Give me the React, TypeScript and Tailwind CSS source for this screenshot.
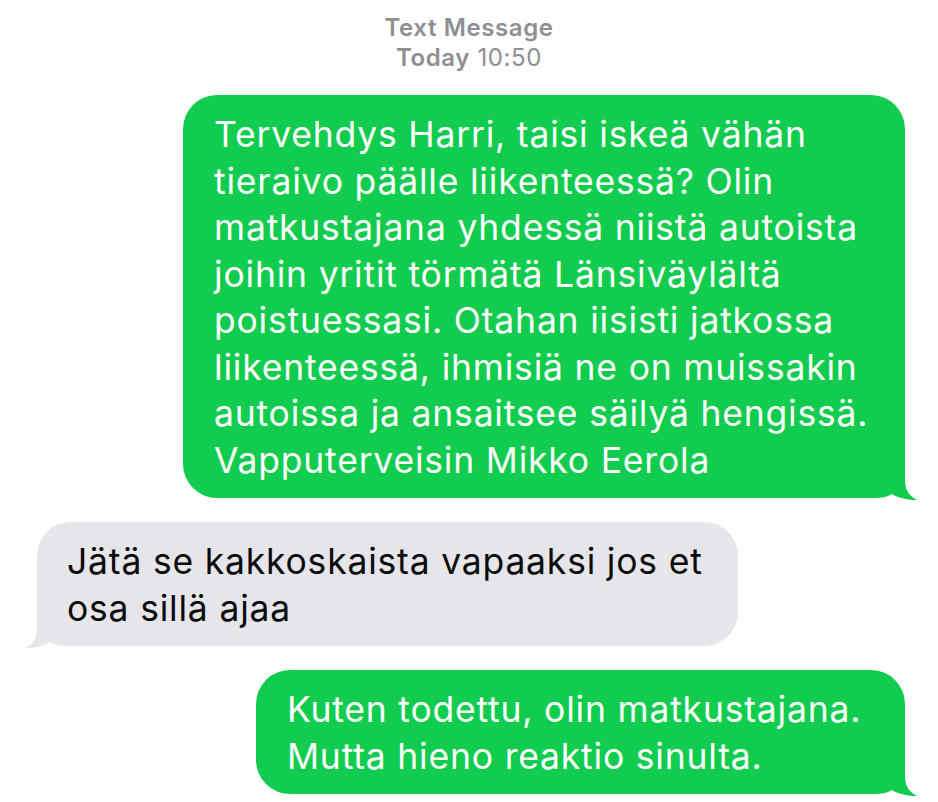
import React from "react";

const GREEN = "#12cc4f";

function Tail({ side, color }: { side: "left" | "right"; color: string }) {
  return (
    <svg
      width="46"
      height="36"
      viewBox="0 0 46 36"
      className={side === "right" ? "absolute right-[-12px] bottom-[-2px]" : "absolute left-[-12px] bottom-[-2px] -scale-x-100"}
    >
      <path d="M0 0 H34 V16 C34 26 38 32 46 36 C38 36 27 34 21 30 C16 33 10 34 4 34 H0 Z" fill={color} />
    </svg>
  );
}

type BubbleProps = Readonly<{
  side: "left" | "right";
  width: string;
  children: React.ReactNode;
}>;

function Bubble({ side, width, children }: BubbleProps) {
  const mine = side === "right";
  return (
    <div className={`flex ${mine ? "justify-end pr-[33px]" : "justify-start pl-[37px]"}`}>
      <div
        className={`relative ${width} rounded-[34px] ${mine ? "bg-[#12cc4f] text-white pl-[31px] pr-[16px]" : "bg-[#e5e5ea] text-[#0b0b0b] pl-[30px] pr-[18px]"} pt-[17px] pb-[14px] text-[35.5px] leading-[46.5px] tracking-[0.8px]`}
      >
        <p className="relative z-10">{children}</p>
        <Tail side={side} color={mine ? GREEN : "#e5e5ea"} />
      </div>
    </div>
  );
}

export default function App() {
  return (
    <div className="min-h-[802px] w-[938px] bg-white font-['Inter','Liberation_Sans',sans-serif]">
      <div className="pt-[13px] text-center text-[24px] leading-[30px] tracking-[0.6px] text-[#8e8e93]">
        <div className="font-semibold">Text Message</div>
        <div>
          <span className="font-semibold">Today</span> 10:50
        </div>
      </div>
      <div className="mt-[22px] flex flex-col gap-[24px]">
        <Bubble side="right" width="w-[722px]">
          Tervehdys Harri, taisi iskeä vähän tieraivo päälle liikenteessä? Olin matkustajana yhdessä niistä autoista
          joihin yritit törmätä Länsiväylältä poistuessasi. Otahan iisisti jatkossa liikenteessä, ihmisiä ne on muissakin
          autoissa ja ansaitsee säilyä hengissä. Vapputerveisin Mikko Eerola
        </Bubble>
        <Bubble side="left" width="w-[701px]">
          Jätä se kakkoskaista vapaaksi jos et osa sillä ajaa
        </Bubble>
        <Bubble side="right" width="w-[649px]">
          Kuten todettu, olin matkustajana. Mutta hieno reaktio sinulta.
        </Bubble>
      </div>
    </div>
  );
}
